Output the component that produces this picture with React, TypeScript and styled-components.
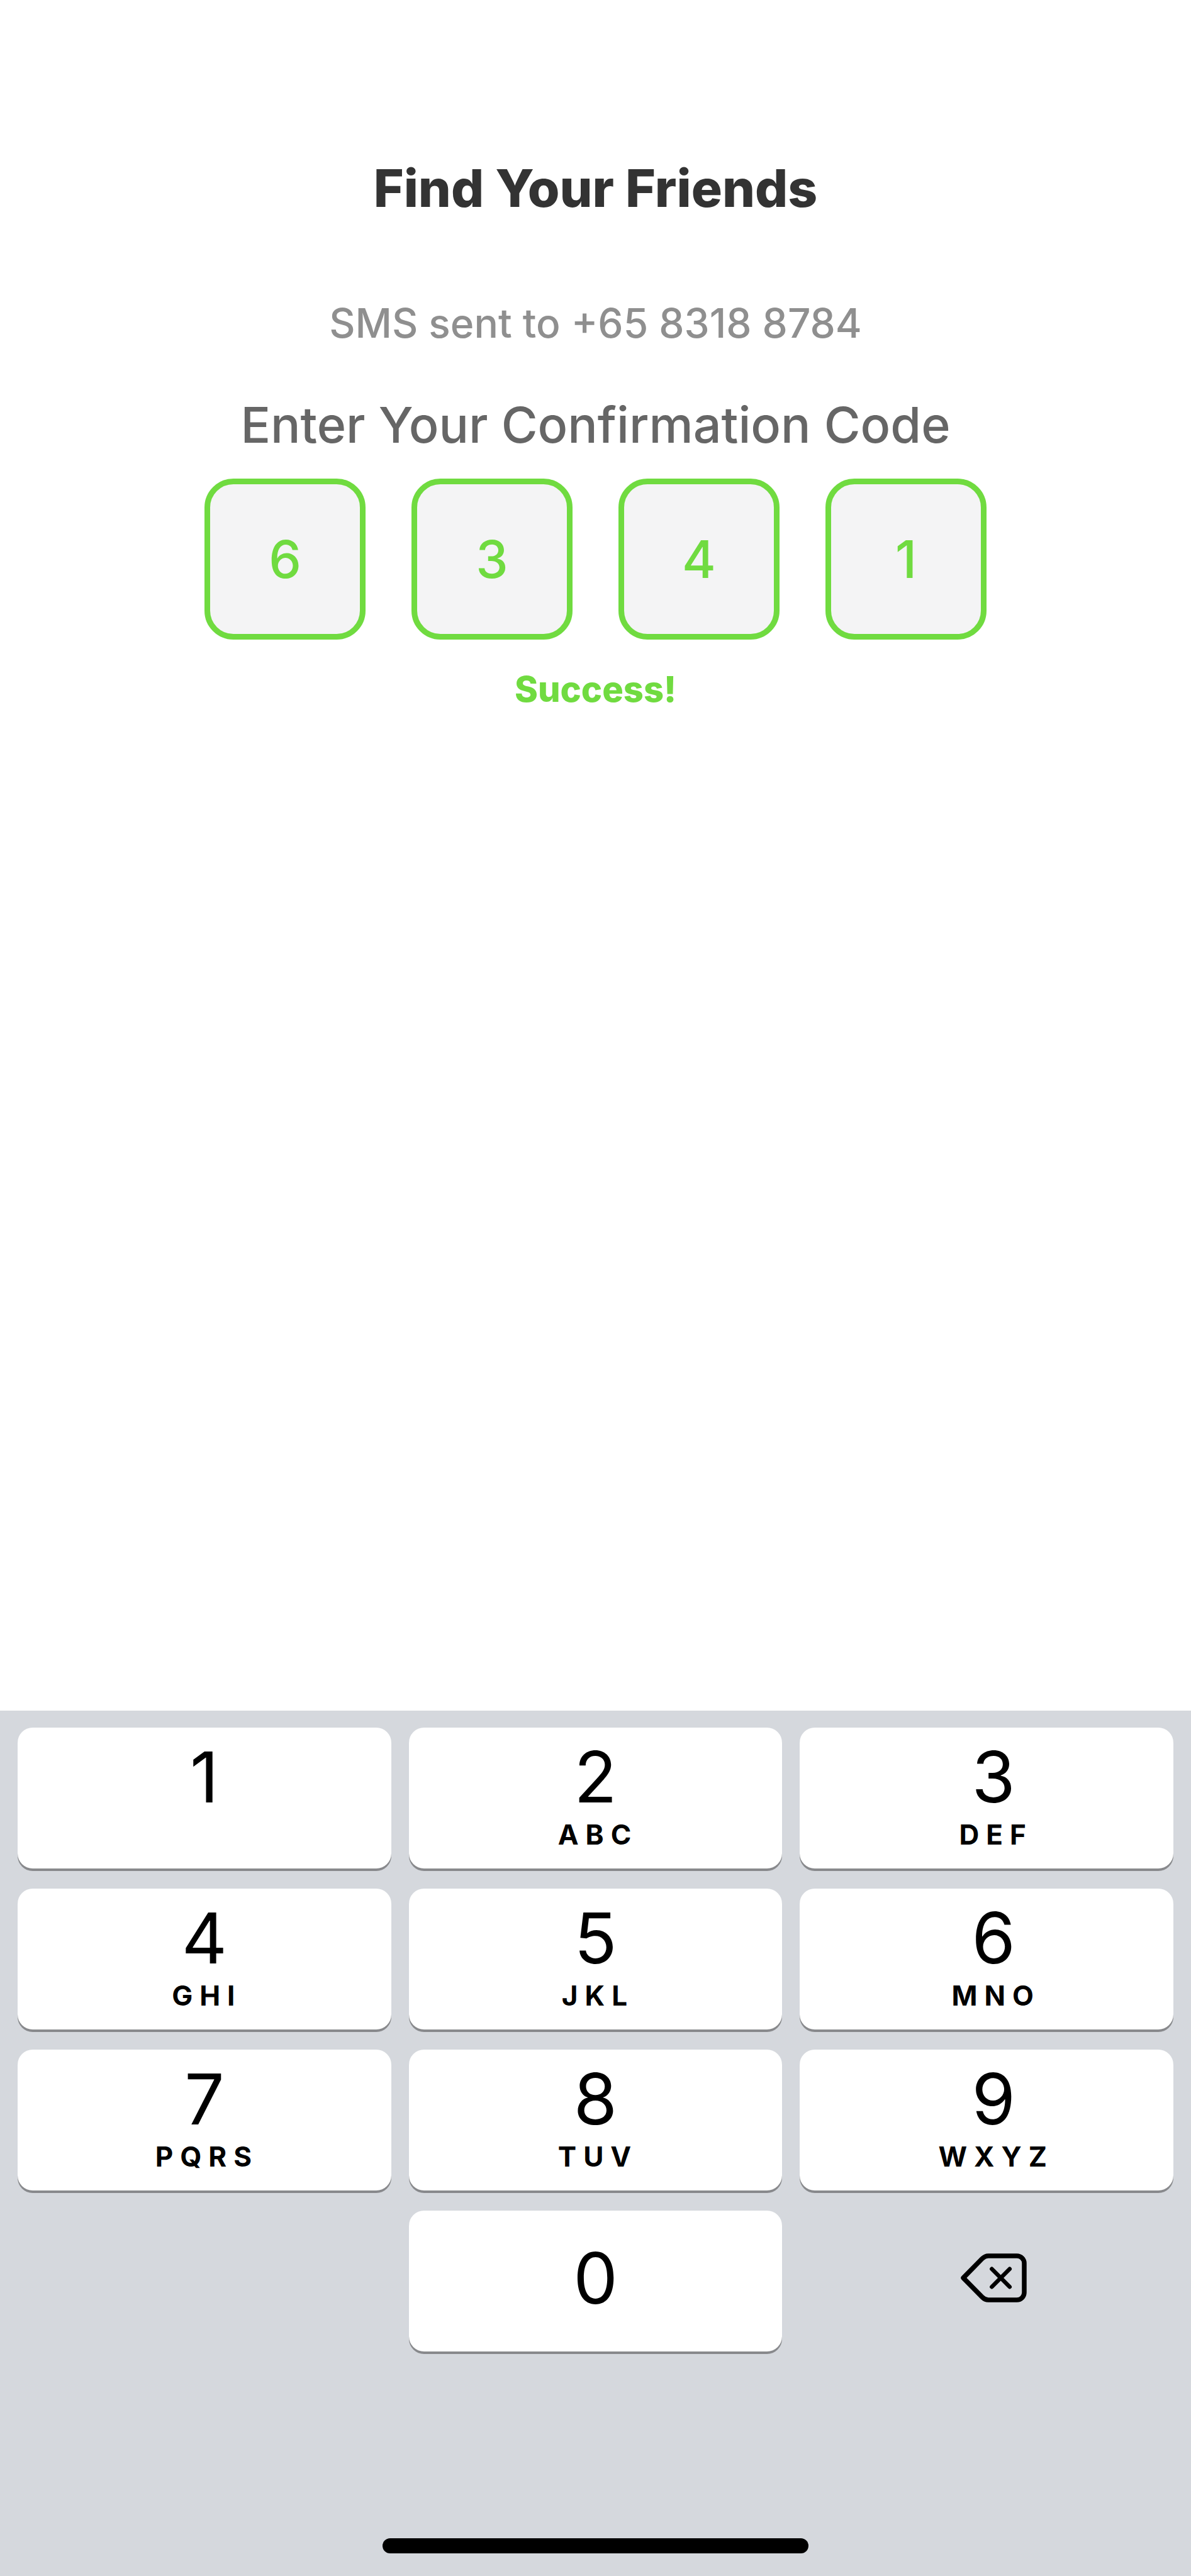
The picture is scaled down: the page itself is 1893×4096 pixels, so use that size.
import React, { useState } from "react";
import styled, { createGlobalStyle } from "styled-components";

const color = {
  green: "#70db40",
  title: "#333333",
  label: "#666666",
  muted: "#8f8f8f",
  field: "#f4f4f5",
  keyboard: "#d5d8dd",
  keyEdge: "#88898c",
};

const GlobalStyle = createGlobalStyle`
  *, *::before, *::after { box-sizing: border-box; }
  body { margin: 0; background: #ffffff; }
  body, button, input { font-family: Inter, "Liberation Sans", sans-serif; }
`;

const Screen = styled.div`
  min-height: 100vh;
  display: flex;
  flex-direction: column;
`;

const Content = styled.main`
  flex: 1;
  display: flex;
  flex-direction: column;
  align-items: center;
  padding: 250px 28px 0;
  text-align: center;
`;

const Title = styled.h1`
  margin: 0;
  color: ${color.title};
  font-size: 82px;
  font-weight: 800;
  line-height: 100px;
`;

const SentTo = styled.p`
  margin: 124px 0 0;
  color: ${color.muted};
  font-size: 64px;
  font-weight: 500;
  line-height: 80px;
`;

const Prompt = styled.h2`
  margin: 71px 0 0;
  color: ${color.label};
  font-size: 79px;
  font-weight: 500;
  line-height: 100px;
`;

const CodeRow = styled.div`
  display: flex;
  gap: 73px;
  margin-top: 36px;
`;

const CodeInput = styled.input`
  width: 256px;
  height: 256px;
  padding: 0;
  border: 9px solid ${color.green};
  border-radius: 46px;
  outline: none;
  background: ${color.field};
  color: ${color.green};
  font-size: 82px;
  font-weight: 500;
  line-height: 100px;
  text-align: center;
`;

const Status = styled.p`
  margin: 47px 0 0;
  color: ${color.green};
  font-size: 56px;
  font-weight: 800;
  line-height: 64px;
`;

const Keyboard = styled.footer`
  display: flex;
  flex-direction: column;
  align-items: center;
  padding: 27px 28px 36px;
  background: ${color.keyboard};
`;

const KeyGrid = styled.div`
  width: 100%;
  display: grid;
  grid-template-columns: repeat(3, 1fr);
  grid-auto-rows: 224px;
  gap: 32px 28px;
`;

const KeyBase = styled.button`
  display: flex;
  flex-direction: column;
  align-items: center;
  justify-content: center;
  gap: 14px;
  padding: 0 0 10px;
  border: 0;
  color: #000000;
`;

const Key = styled(KeyBase)<{ $column: number }>`
  grid-column: ${(p) => p.$column};
  padding-left: ${(p) => (p.$column === 3 ? 22 : 0)}px;
  border-radius: 24px;
  background: #ffffff;
  box-shadow: 0 4px 0 ${color.keyEdge};
`;

const DeleteKey = styled(KeyBase)`
  grid-column: 3;
  padding-left: 22px;
  background: transparent;
`;

const Digit = styled.span`
  font-size: 112px;
  font-weight: 400;
  line-height: 112px;
`;

const Letters = styled.span`
  height: 44px;
  padding-left: 8px;
  font-size: 44px;
  font-weight: 700;
  line-height: 44px;
  letter-spacing: 11px;
`;

const HomeIndicator = styled.div`
  width: 677px;
  max-width: 100%;
  height: 24px;
  margin-top: 297px;
  border-radius: 12px;
  background: #000000;
`;

const DeleteIcon = () => (
  <svg width="105" height="78" viewBox="0 0 321 239" fill="none" stroke="#000000" strokeLinecap="round" strokeLinejoin="round" aria-hidden="true">
    <path d="M12 119.5 L104 26 Q118 12 134 12 H273 A36 36 0 0 1 309 48 V191 A36 36 0 0 1 273 227 H134 Q118 227 104 213 Z" strokeWidth="23" />
    <path d="M151 76 L238 163 M238 76 L151 163" strokeWidth="20" />
  </svg>
);

const keys: { digit: string; letters?: string }[] = [
  { digit: "1", letters: "" },
  { digit: "2", letters: "ABC" },
  { digit: "3", letters: "DEF" },
  { digit: "4", letters: "GHI" },
  { digit: "5", letters: "JKL" },
  { digit: "6", letters: "MNO" },
  { digit: "7", letters: "PQRS" },
  { digit: "8", letters: "TUV" },
  { digit: "9", letters: "WXYZ" },
];

const slots = [0, 1, 2, 3];

export default function App() {
  const [code, setCode] = useState("6341");
  const press = (digit: string) => setCode((c) => (c + digit).slice(0, 4));

  return (
    <>
      <GlobalStyle />
      <Screen>
        <Content>
          <Title>Find Your Friends</Title>
          <SentTo>SMS sent to +65 8318 8784</SentTo>
          <Prompt>Enter Your Confirmation Code</Prompt>
          <CodeRow>
            {slots.map((i) => (
              <CodeInput key={i} aria-label={`Digit ${i + 1}`} inputMode="numeric" readOnly value={code[i] ?? ""} />
            ))}
          </CodeRow>
          <Status role="status">{code.length === 4 ? "Success!" : ""}</Status>
        </Content>
        <Keyboard>
          <KeyGrid>
            {keys.map(({ digit, letters }, i) => (
              <Key key={digit} type="button" $column={(i % 3) + 1} onClick={() => press(digit)}>
                <Digit>{digit}</Digit>
                <Letters>{letters}</Letters>
              </Key>
            ))}
            <Key type="button" $column={2} onClick={() => press("0")}>
              <Digit>0</Digit>
            </Key>
            <DeleteKey type="button" aria-label="Delete" onClick={() => setCode((c) => c.slice(0, -1))}>
              <DeleteIcon />
            </DeleteKey>
          </KeyGrid>
          <HomeIndicator />
        </Keyboard>
      </Screen>
    </>
  );
}
